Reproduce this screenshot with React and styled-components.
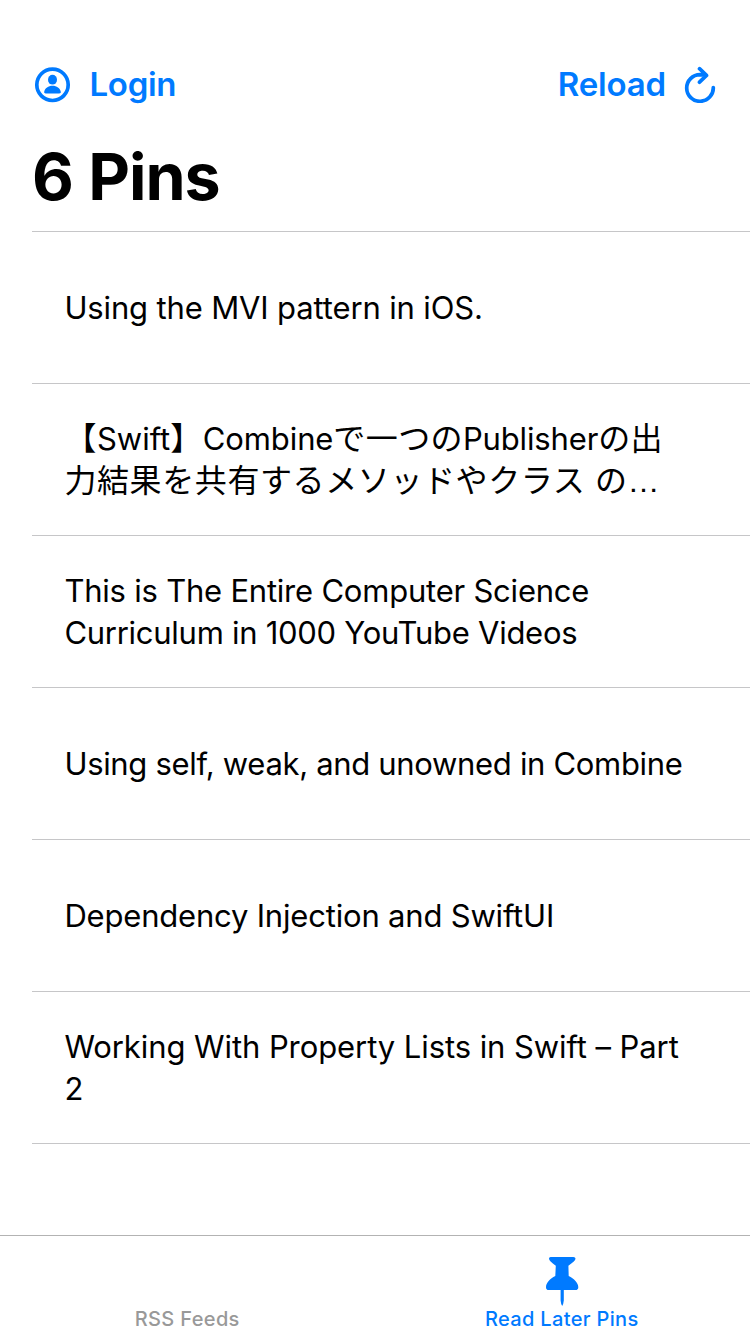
import React from "react";
import styled, { createGlobalStyle } from "styled-components";

const Global = createGlobalStyle`
  * { box-sizing: border-box; }
  body { margin: 0; background: #fff; }
`;
const Screen = styled.div`
  width: 750px; height: 1334px; display: flex; flex-direction: column;
  background: #fff; color: #000; overflow: hidden;
  font-family: Inter, "Noto Sans CJK JP", sans-serif;
`;
const NavBar = styled.header`
  display: flex; justify-content: space-between; align-items: center;
  height: 88px; margin-top: 40px; padding: 0 34px;
`;
const NavButton = styled.button`
  display: flex; align-items: center; gap: ${p => p.$gap}px; padding: 0; border: 0;
  background: none; color: #007aff; font: inherit; font-size: 33px;
  font-weight: 600; line-height: 40px; letter-spacing: ${p => p.$track}px;
`;
const Title = styled.h1`
  margin: 0; height: 103px; padding: 9px 32px 0; font-size: 64.5px;
  line-height: 80px; font-weight: 700; letter-spacing: -1px;
  word-spacing: 1px; white-space: nowrap;
`;
const List = styled.ul`
  flex: 1; margin: 0 0 0 32px; padding: 0; list-style: none;
  border-top: 1px solid #c6c6c8;
`;
const Row = styled.li`
  height: 152px; display: flex; align-items: center; padding-left: 32.4px;
  border-bottom: 1px solid #c6c6c8;
`;
const Line = styled.span`
  display: block; height: 42px; font-size: 31px; line-height: 42px; white-space: pre;
`;
const Run = styled.span`
  letter-spacing: ${p => p.$track}px;
`;
const KanaRun = styled(Run)`
  font-size: 32px; line-height: 1;
`;
const Ellipsis = styled.span`
  font-family: "Liberation Sans", sans-serif; font-size: 32px; line-height: 1;
`;
const TabBar = styled.nav`
  height: 99px; display: flex; border-top: 1px solid #b3b3b3;
`;
const Tab = styled.div`
  flex: 1; display: flex; flex-direction: column; align-items: center;
  justify-content: flex-end; padding: 0 ${p => (p.$active ? 1 : 0)}px 3px 0; font-size: 20px;
  line-height: 24px; font-weight: 500; letter-spacing: 0.35px;
  color: ${p => (p.$active ? "#007aff" : "#999")};
`;
const PinIcon = styled.svg`
  display: block;
`;

/* Each row holds lines, each line holds [text, letter spacing, kana] runs. */
const rows = [
  [[["Using the MVI pattern in iOS.", -0.14]]],
  [
    [["【", 0.5, true], ["Swift", 0], ["】", 0.5, true], ["Combine", -0.1], ["で一つの", 0.4, true], ["Publisher", -0.15], ["の出", 0.4, true]],
    [["力結果を共有するメソッドやクラス の", 0.6, true], ["…", 0]],
  ],
  [[["This is The Entire Computer Science", -0.22]], [["Curriculum in 1000 YouTube Videos", -0.27]]],
  [[["Using self, weak, and unowned in Combine", -0.32]]],
  [[["Dependency Injection and SwiftUI", -0.19]]],
  [[["Working With Property Lists in Swift – Part", -0.08]], [["2", 0]]],
];

function TextRun({ text, track, kana }) {
  if (text === "…") return <Ellipsis>{text}</Ellipsis>;
  return kana ? <KanaRun $track={track}>{text}</KanaRun> : <Run $track={track}>{text}</Run>;
}

export default function App() {
  return (
    <Screen>
      <Global />
      <NavBar>
        <NavButton $track={-0.3} $gap={18.5}>
          <svg width="37" height="37" viewBox="0 -1 37 37" fill="none">
            <circle cx="18.5" cy="17.800" r="15.7" stroke="currentColor" strokeWidth="3.7" />
            <ellipse cx="18.500" cy="12.700" rx="4.500" ry="4.900" fill="currentColor" />
            <path d="M11.800 26.500C10.600 26.500 10 25.800 10.200 24.800C10.900 21.200 14.300 18.800 18.500 18.800S26.100 21.200 26.800 24.800C27 25.800 26.400 26.500 25.200 26.500Z" fill="currentColor" />
          </svg>
          Login
        </NavButton>
        <NavButton $track={-0.15} $gap={18}>
          Reload
          <svg width="32" height="37" viewBox="0 -1 32 37" fill="none" stroke="currentColor" strokeWidth="3.700" strokeLinecap="round" strokeLinejoin="round">
            <path d="M29.300 20.500A13.300 13.300 0 1 1 16 7.700L22 8.400M15.500 1.700L22.500 8.400L15.500 15.200" />
          </svg>
        </NavButton>
      </NavBar>
      <Title>6 Pins</Title>
      <List>
        {rows.map((lines, i) => (
          <Row key={i}>
            <div>
              {lines.map((runs, j) => (
                <Line key={j}>
                  {runs.map(([text, track, kana], k) => (
                    <TextRun key={k} text={text} track={track} kana={kana} />
                  ))}
                </Line>
              ))}
            </div>
          </Row>
        ))}
      </List>
      <TabBar>
        <Tab>RSS Feeds</Tab>
        <Tab $active>
          <PinIcon width="34" height="50" viewBox="0 0 34 50" fill="currentColor">
            <path d="M5.600 0H28.400Q30.500 0 30.500 1.500Q30.500 3.200 28.800 4.600Q26.500 6.500 23.400 8.700L23.700 19C29 21.500 33.300 26 33.300 30.200Q33.300 33 30.300 33H18.800V43.500Q18.500 47 17.200 49Q15.900 47 15.600 43.500V33H3.700Q1 33 1 30.200C1 26 5 21.500 10.300 19L10.800 8.700Q7.500 6.500 5.600 4.600Q4 3.200 4 1.500Q4 0 5.600 0Z" />
          </PinIcon>
          Read Later Pins
        </Tab>
      </TabBar>
    </Screen>
  );
}
